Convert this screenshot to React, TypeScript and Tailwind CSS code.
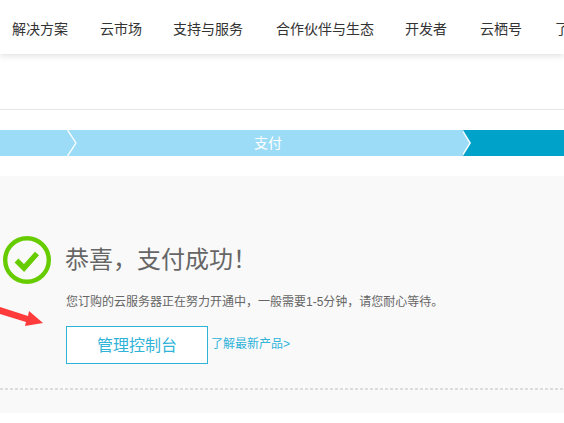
const font = { fontFamily: '"Liberation Sans", "Noto Sans CJK SC", sans-serif' };

const navItems = [
  { label: "解决方案", width: "w-[88px] pl-3" },
  { label: "云市场", width: "w-[85px] pl-3" },
  { label: "支持与服务", width: "w-[103px] pl-0" },
  { label: "合作伙伴与生态", width: "w-[129px] pl-0" },
  { label: "开发者", width: "w-[75px] pl-0" },
  { label: "云栖号", width: "w-[75px] pl-0" },
  { label: "了解阿里云", width: "w-[100px] pl-0" },
];

function Chevron({ className }: { className: string }) {
  return (
    <svg viewBox="0 0 10 26" className={className} aria-hidden="true">
      <path d="M0.5 0 L9 13 L0.5 26" fill="none" stroke="#ffffff" strokeWidth="1.3" />
    </svg>
  );
}

export default function App() {
  return (
    <div style={font} className="w-[564px] h-[423px] overflow-hidden bg-white relative">
      <header className="h-[54px] pt-[3px] bg-white shadow-[0_2px_6px_rgba(0,0,0,0.12)] flex items-center whitespace-nowrap overflow-hidden text-sm text-[#333333]">
        {navItems.map((item) => (
          <div key={item.label} className={`${item.width} shrink-0`}>
            {item.label}
          </div>
        ))}
      </header>

      <div className="h-[55px] border-b border-[#e5e5e5] box-content -mb-px" />

      <div className="mt-[21px] h-[26px] flex text-sm text-white">
        <div className="w-[67px] bg-[#9cdcf6] relative">
          <Chevron className="absolute left-[67px] top-0 h-[26px] w-[10px] z-10" />
        </div>
        <div className="w-[396px] bg-[#9cdcf6] flex items-center justify-center pl-[6px]">支付</div>
        <div className="flex-1 bg-[#00a2ca] relative">
          <svg viewBox="0 0 10 26" className="absolute left-0 top-0 h-[26px] w-[10px]" aria-hidden="true">
            <path d="M0 0 L8 13 L0 26 Z" fill="#9cdcf6" />
            <path d="M-1 0 L7 13 L-1 26" fill="none" stroke="#ffffff" strokeWidth="1.3" />
          </svg>
        </div>
      </div>

      <main className="mt-5 h-[237px] bg-[#f9f9f9] px-[3px] pt-[60px]">
        <div className="flex items-start">
          <svg viewBox="0 0 48 48" className="w-12 h-12 shrink-0" aria-hidden="true">
            <circle cx="24" cy="24" r="21.8" fill="none" stroke="#66cc00" strokeWidth="4.4" />
            <path d="M13.5 24.5 L21 32 L34 17.5" fill="none" stroke="#66cc00" strokeWidth="5.4" />
          </svg>
          <div className="ml-[15px]">
            <h1 className="-ml-px text-2xl leading-[48px] text-[#666666] font-normal">恭喜，支付成功！</h1>
            <p className="mt-[9px] text-xs leading-[18px] text-[#666666] whitespace-nowrap">
              您订购的云服务器正在努力开通中，一般需要1-5分钟，请您耐心等待。
            </p>
            <div className="mt-[15px] flex items-center">
              <div className="w-[142px] h-[38px] pt-[2px] bg-white border border-[#2fb3d9] text-[#2fb3d9] text-base flex items-center justify-center">
                管理控制台
              </div>
              <a className="ml-[3px] -mt-[2px] text-xs text-[#2fb3d9] whitespace-nowrap">了解最新产品&gt;</a>
            </div>
          </div>
        </div>
        <div className="mt-[24px] -mx-[3px] h-[2px] bg-[repeating-linear-gradient(90deg,#dddddd_0,#dddddd_3px,transparent_3px,transparent_5px)]" />
      </main>

      <svg viewBox="0 0 44 30" className="absolute left-0 top-[304px] w-[44px] h-[30px]" aria-hidden="true">
        <path d="M0 3 L28 12 L29 7 L43 19 L25 22 L26 18 L0 10 Z" fill="#ff3b3b" />
      </svg>
    </div>
  );
}
